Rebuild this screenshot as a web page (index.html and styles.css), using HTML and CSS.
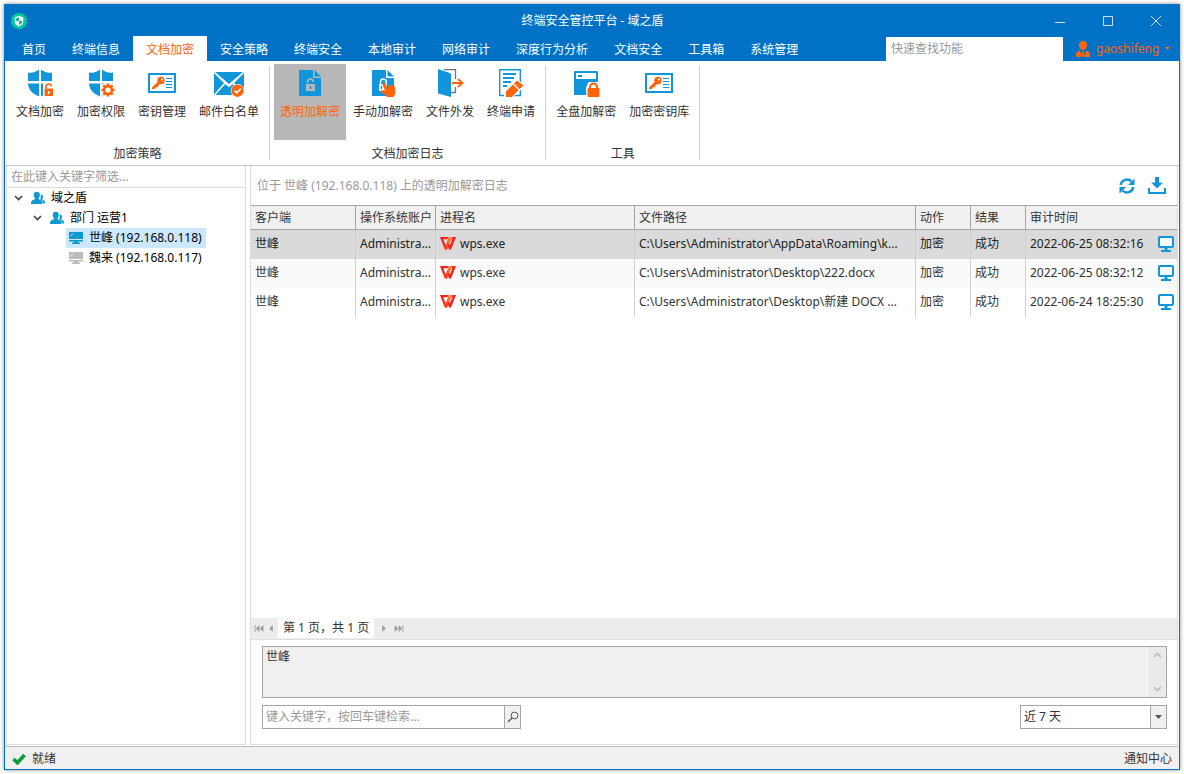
FILE: index.html
```html
<!DOCTYPE html>
<html lang="zh-CN">
<head>
<meta charset="utf-8">
<title>终端安全管控平台 - 域之盾</title>
<link rel="stylesheet" href="styles.css">
</head>
<body>
<svg class="defs" aria-hidden="true">
  <defs>
    <linearGradient id="wps-red" x1="0" y1="0" x2="1" y2="1"><stop offset="0" stop-color="#f5151c"/><stop offset="1" stop-color="#ff4a1c"/></linearGradient>
    <linearGradient id="wps-orange" x1="0" y1="1" x2="0" y2="0"><stop offset="0" stop-color="#ff3a1c"/><stop offset="1" stop-color="#ff9a3c"/></linearGradient>
  </defs>
  <symbol id="shield" viewBox="-1 0 30 30">
    <path fill="#1296db" d="M2 3.500C6 4.500 10 3.200 13 .6V12H2zM15 .6C18 3.200 22 4.500 26 3.500V12H15zM2 14.500H13V27.500C6 24.500 2.500 20.500 2 14.500zM15 14.500H26C25.500 20.500 22 24.500 15 27.500z"/>
  </symbol>
  <symbol id="keycard" viewBox="-1 0 30 30">
    <rect x="1" y="5" width="26" height="18" fill="#fff" stroke="#1296db" stroke-width="2"/>
    <path d="M4 18.500L10 12.500L12.500 15L10.500 16.200L10 18L8 18.200L6.500 20H4z" fill="#fd640c"/>
    <circle cx="13" cy="11.500" r="3.700" fill="#fd640c"/><circle cx="14" cy="10.500" r="1.100" fill="#fff"/>
    <path d="M18 9.500h6M18 12.500h6M18 15.500h6M18 18.500h6" stroke="#1296db" stroke-width="1.200"/>
  </symbol>
  <symbol id="people" viewBox="0 0 14 14">
    <path fill="#0e9ad0" d="M9.500 3.500c1.800-.3 2.700.9 2.500 2.500-.1 1-.4 1.500-.8 2 0 .6.300.8 1 1 1.300.5 1.800 1.200 1.800 3.500h-1.800C12 10.500 11 9.300 9 8.300 9.900 7 10.200 5 9.500 3.500z"/>
    <path fill="#0e9ad0" d="M5.800.7c2.200 0 3.200 1.400 3.100 3.300C8.800 5.500 8.300 6.500 7.700 7.200c-.3.800.2 1.100 1.200 1.500 2 .7 2.700 1.500 2.700 4.300H0c0-2.800.8-3.600 2.700-4.300 1-.4 1.500-.7 1.200-1.500C3.300 6.500 2.800 5.500 2.700 4 2.600 2.100 3.600.7 5.800.7z"/>
  </symbol>
  <symbol id="pc" viewBox="0 0 14 12">
    <path d="M0 0h14v7H0zM0 8h14v1.500H9v1H11V12H3v-1.500h2v-1H0z" fill="currentColor"/>
    <path d="M1.500 4.200L4 1.700" stroke="#fff" stroke-width=".8"/>
  </symbol>
  <symbol id="screen" viewBox="0 0 16 16">
    <rect x="1" y="1" width="14" height="10" rx="1" fill="#fff" stroke="#1296db" stroke-width="2"/>
    <path fill="#1296db" d="M6.500 12h3v2H13v2H3v-2h3.500z"/>
  </symbol>
  <symbol id="wps" viewBox="0 0 16 13">
    <path fill="url(#wps-red)" d="M0 0H8.500L7.500 2.300H3.300L5.700 8.500 9 0H11.500L7 12.500H4.700z"/>
    <path fill="url(#wps-orange)" d="M9.300 0H12.500L7 12.500H5.500z"/>
    <path fill="#f8201c" d="M12.300 0H16L11 12.500H9L7.800 9.300 8.900 6.500 9.900 8.500 12.500 2.300H11.500z"/>
  </symbol>
  <symbol id="chevron" viewBox="0 0 9 6"><path d="M1 1L4.500 4.500L8 1" fill="none" stroke="currentColor" stroke-width="1.600"/></symbol>
</svg>

<div class="window">
  <header class="titlebar">
    <svg class="logo" viewBox="0 0 16 16"><circle cx="8" cy="8" r="8" fill="#05c89a"/><path fill="#fff" d="M8 2.800L12.300 4.400V8.500C12.300 11 10 12.700 8 13.500 6 12.700 3.700 11 3.700 8.500V4.400z"/><path fill="#05b894" d="M8 4.200V8H4.800V5.400zM8 8h3.200c0 2-1.500 3.200-3.200 4z"/></svg>
    <h1 class="title">终端安全管控平台 - 域之盾</h1>
    <div class="controls">
      <button aria-label="最小化"><svg viewBox="0 0 10 10"><path d="M0 6.500H10"/></svg></button>
      <button aria-label="最大化"><svg viewBox="0 0 10 10"><path d="M.5.5h9v9h-9z"/></svg></button>
      <button aria-label="关闭"><svg viewBox="0 0 10 10"><path d="M0 0L10 10M10 0L0 10"/></svg></button>
    </div>
  </header>

  <div class="tabbar">
    <nav class="tabs">
      <button>首页</button><button>终端信息</button><button class="active">文档加密</button><button>安全策略</button><button>终端安全</button><button>本地审计</button><button>网络审计</button><button>深度行为分析</button><button>文档安全</button><button>工具箱</button><button>系统管理</button>
    </nav>
    <input class="quick" type="text" placeholder="快速查找功能" aria-label="快速查找功能">
    <button class="user">
      <svg class="user-icon" viewBox="0 0 14 16"><path fill="#fd640c" d="M7 0c2.500 0 4 1.600 4 4S9.300 9 7 9 3 6.400 3 4 4.500 0 7 0zM4 9.500l2 6.500H1.500C.5 16 0 15.500 0 14.500 0 11 1.500 10 4 9.500zM10 9.500c2.500.5 4 1.500 4 5 0 1-.5 1.500-1.500 1.500H8zM6.200 10.200h1.600l.5 3.800L7 16l-1.300-2z"/></svg>
      <span>gaoshifeng</span>
      <svg class="user-caret" viewBox="0 0 5 3"><path d="M0 0h5L2.500 3z" fill="#fd640c"/></svg>
    </button>
  </div>

  <div class="ribbon">
    <section class="group">
      <div class="tools">
        <button class="tool"><svg viewBox="-1 0 30 30"><use href="#shield" x="-1" width="30" height="30"/><path fill="#fff" d="M17 14h12v15H17z"/><path d="M20 19.500V18a2.700 2.700 0 0 1 5.400-.6" fill="none" stroke="#fd640c" stroke-width="1.600"/><path fill="#fd640c" d="M18.500 19.500H27V27H18.500z"/><path d="M22.700 22v3" stroke="#fff" stroke-width="1.500"/></svg>文档加密</button>
        <button class="tool"><svg viewBox="-1 0 30 30"><use href="#shield" x="-1" width="30" height="30"/><circle cx="21" cy="21" r="7.800" fill="#fff"/><circle cx="21" cy="21" r="3.900" fill="none" stroke="#fd640c" stroke-width="2.600"/><path stroke="#fd640c" stroke-width="2.600" d="M21 14.500v3M21 24.500v3M14.500 21h3M24.500 21h3M16.400 16.400l2 2M23.600 23.600l2 2M25.600 16.400l-2 2M18.400 23.600l-2 2"/></svg>加密权限</button>
        <button class="tool"><svg viewBox="-1 0 30 30"><use href="#keycard" x="-1" width="30" height="30"/></svg>密钥管理</button>
        <button class="tool"><svg viewBox="-1 0 30 30"><path fill="#1296db" d="M0 3H28L14 15zM-1 4L9 14-1 25.500zM29 4V25L19 14zM10.300 15L14 18.200 17.700 15 27.500 26H.5z"/><circle cx="22.500" cy="21.700" r="6.800" fill="#fff"/><circle cx="22.500" cy="21.700" r="6.200" fill="#fd640c"/><path d="M19.500 21.700l2.300 2.200 4-4.200" fill="none" stroke="#fff" stroke-width="1.700"/></svg>邮件白名单</button>
      </div>
      <h2>加密策略</h2>
    </section>
    <section class="group">
      <div class="tools">
        <button class="tool selected"><svg viewBox="-1 0 30 30"><path fill="#1296db" d="M3 1H17V9H25V27H3zM18.500 1L25 7.500H18.500z"/><path d="M11.500 14V13a2.900 2.900 0 0 1 5.800 0" fill="none" stroke="#b8b8b8" stroke-width="1.500"/><path fill="#b8b8b8" d="M10 15h9v7h-9z"/><path d="M14.500 17v3" stroke="#1296db" stroke-width="1.500"/></svg>透明加解密</button>
        <button class="tool"><svg viewBox="-1 0 30 30"><path fill="#1296db" d="M3 1H17V9H25V27H3zM18.500 1L25 7.500H18.500z"/><path d="M11.500 15V13a2.900 2.900 0 0 1 5.800 0v2" fill="none" stroke="#fff" stroke-width="1.500"/><path fill="#fff" d="M10 15h8v7h-8z"/><path d="M12.500 17v3" stroke="#1296db" stroke-width="1.500"/><path fill="#fd640c" d="M14 14.500c1-1 2.300-.5 2.800.7l1.400 3 3.800-2.200c1-.5 1.500.2 1.800.8 1-.4 1.700.2 2 1.200.5 2 .7 4.500.2 7.500L24.500 28H18c-1-2-3-3.500-5.500-4.300-1.500-.7-1-2.400.4-2.500l3.100.3-2.300-5.300c-.2-.6-.1-1.200.3-1.700z"/></svg>手动加解密</button>
        <button class="tool"><svg viewBox="-1 0 30 30"><path d="M8 .7H19.500V10M19.500 18V23.500H14" fill="none" stroke="#5f7890" stroke-width="1.300"/><path fill="#1296db" d="M2 0L15 4.500V28L2 24.500z"/><path d="M16 14h9M22 10l4.500 4-4.500 4" fill="none" stroke="#fd640c" stroke-width="1.800"/></svg>文件外发</button>
        <button class="tool"><svg viewBox="-1 0 30 30"><path d="M2.700.7H23.300V26.500H2.700z" fill="#fff" stroke="#1296db" stroke-width="1.400"/><path d="M6 5h13M6 9h11M6 13h8M6 17h4" stroke="#1296db" stroke-width="2"/><path fill="#fff" d="M7 29V22L20 10l8 7-13 12z"/><path fill="#fd640c" d="M9 28v-5.500l7-7 5.500 5.500L15 28zM17 14.500l3-3 6.500 5-4 3.600z"/></svg>终端申请</button>
      </div>
      <h2>文档加密日志</h2>
    </section>
    <section class="group">
      <div class="tools">
        <button class="tool"><svg viewBox="-1 0 30 30"><rect x="2" y="2" width="24" height="24" rx="1" fill="#1296db"/><path fill="#fff" d="M4 4h20v6H4z"/><path fill="#1296db" d="M6 6h4v2H6z"/><path fill="#fff" d="M14 19l2.500-6h10L28 19v10H14.500z"/><path d="M18 19.500V18a3.500 3.500 0 0 1 7 0v1.500" fill="none" stroke="#fd640c" stroke-width="2"/><rect x="15.500" y="19" width="12" height="9" rx="1" fill="#fd640c"/></svg>全盘加解密</button>
        <button class="tool"><svg viewBox="-1 0 30 30"><use href="#keycard" x="-1" width="30" height="30"/></svg>加密密钥库</button>
      </div>
      <h2>工具</h2>
    </section>
  </div>

  <div class="body">
    <aside class="side">
      <input class="filter" type="text" placeholder="在此键入关键字筛选..." aria-label="在此键入关键字筛选">
      <ul class="tree">
        <li><div class="node"><svg class="chev"><use href="#chevron"/></svg><svg class="people"><use href="#people"/></svg>域之盾</div>
          <ul>
            <li><div class="node"><svg class="chev"><use href="#chevron"/></svg><svg class="people"><use href="#people"/></svg>部门 运营1</div>
              <ul class="leaves">
                <li><div class="node leaf current"><svg class="pc"><use href="#pc"/></svg>世峰 (192.168.0.118)</div></li>
                <li><div class="node leaf offline"><svg class="pc"><use href="#pc"/></svg>魏来 (192.168.0.117)</div></li>
              </ul>
            </li>
          </ul>
        </li>
      </ul>
    </aside>

    <main class="main">
      <div class="toolbar">
        <p>位于 世峰 (192.168.0.118) 上的透明加解密日志</p>
        <button aria-label="刷新"><svg class="refresh" viewBox="0 0 16 16"><g fill="none" stroke="#1296db" stroke-width="2.400"><path d="M1.700 7A6.300 6.300 0 0 1 12.500 3.500"/><path d="M14.300 9A6.300 6.300 0 0 1 3.500 12.500"/></g><path fill="#1296db" d="M15.500.5V7H9zM.5 15.500V9H7z"/></svg></button>
        <button aria-label="下载"><svg class="download" viewBox="0 0 18 17"><path fill="#1296db" d="M7 0h4v5.500h4L9 11.500 3 5.500h4zM0 11h2v4h14v-4h2v6H0z"/></svg></button>
      </div>
      <table class="log">
        <colgroup><col class="c-client"><col class="c-account"><col class="c-process"><col><col class="c-short"><col class="c-short"><col class="c-time"></colgroup>
        <thead><tr><th>客户端</th><th>操作系统账户</th><th>进程名</th><th>文件路径</th><th>动作</th><th>结果</th><th>审计时间</th></tr></thead>
        <tbody>
          <tr class="picked"><td>世峰</td><td>Administra...</td><td><span class="cell"><svg class="wps"><use href="#wps"/></svg>wps.exe</span></td><td>C:\Users\Administrator\AppData\Roaming\k...</td><td>加密</td><td>成功</td><td><span class="cell time">2022-06-25 08:32:16<svg class="screen"><use href="#screen"/></svg></span></td></tr>
          <tr class="alt"><td>世峰</td><td>Administra...</td><td><span class="cell"><svg class="wps"><use href="#wps"/></svg>wps.exe</span></td><td>C:\Users\Administrator\Desktop\222.docx</td><td>加密</td><td>成功</td><td><span class="cell time">2022-06-25 08:32:12<svg class="screen"><use href="#screen"/></svg></span></td></tr>
          <tr><td>世峰</td><td>Administra...</td><td><span class="cell"><svg class="wps"><use href="#wps"/></svg>wps.exe</span></td><td>C:\Users\Administrator\Desktop\新建 DOCX ...</td><td>加密</td><td>成功</td><td><span class="cell time">2022-06-24 18:25:30<svg class="screen"><use href="#screen"/></svg></span></td></tr>
        </tbody>
      </table>
      <div class="pager">
        <button aria-label="第一页"><svg class="p-end" viewBox="0 0 10 8"><path d="M0 0h1v8H0zM5.500 0v8L1.500 4zM10 0v8L6 4z"/></svg></button>
        <button aria-label="上一页"><svg class="p-one" viewBox="0 0 4 8"><path d="M4 0v8L0 4z"/></svg></button>
        <span>第 1 页，共 1 页</span>
        <button aria-label="下一页"><svg class="p-one" viewBox="0 0 4 8"><path d="M0 0v8L4 4z"/></svg></button>
        <button aria-label="最后一页"><svg class="p-end" viewBox="0 0 10 8"><path d="M9 0h1v8H9zM4.500 0v8L8.500 4zM0 0v8L4 4z"/></svg></button>
      </div>
      <div class="detail">
        <div class="memo">
          <textarea readonly aria-label="详细内容">世峰</textarea>
          <div class="scroll">
            <button aria-label="向上滚动"><svg class="chev up"><use href="#chevron"/></svg></button>
            <button aria-label="向下滚动"><svg class="chev"><use href="#chevron"/></svg></button>
          </div>
        </div>
        <div class="query">
          <div class="search">
            <input type="text" placeholder="键入关键字，按回车键检索..." aria-label="键入关键字检索">
            <button aria-label="检索"><svg viewBox="0 0 12 12"><circle cx="7.500" cy="4.500" r="3.400" fill="none" stroke="#555"/><path d="M5 7L1 11" stroke="#555" stroke-width="1.400"/></svg></button>
          </div>
          <div class="range">
            <select aria-label="时间范围"><option>近 7 天</option></select>
            <span class="drop"><svg viewBox="0 0 7 4"><path d="M0 0h7L3.500 4z" fill="#555"/></svg></span>
          </div>
        </div>
      </div>
    </main>
  </div>

  <footer class="status">
    <svg viewBox="0 0 14 12"><path d="M1.500 6L5.500 9.800L12.500 2" fill="none" stroke="#0f9d3a" stroke-width="3.600"/></svg>
    <span>就绪</span>
    <button>通知中心</button>
  </footer>
</div>
</body>
</html>
```

FILE: styles.css
```css
* { box-sizing: border-box; }
body {
  margin: 0;
  padding: 4px;
  height: 100vh;
  background: #fff;
  color: #333;
  font: 12px/20px "Noto Sans", "Noto Sans CJK SC", sans-serif;
}
button, input, select, textarea {
  margin: 0;
  padding: 0;
  border: 0;
  border-radius: 0;
  background: none;
  color: inherit;
  font: inherit;
  outline: none;
}
input::placeholder { color: #999; opacity: 1; }
svg { display: block; flex: none; }
h1, h2, p, ul { margin: 0; padding: 0; font-size: 12px; font-weight: 400; }
ul { list-style: none; }
.defs { position: absolute; width: 0; height: 0; }

.window {
  display: flex;
  flex-direction: column;
  height: 100%;
  border: 1px solid #0072c6;
  box-shadow: 0 0 4px rgba(0, 0, 0, .45);
}

/* title bar and tabs */
.titlebar {
  display: grid;
  grid-template-columns: 1fr auto 1fr;
  align-items: center;
  height: 31px;
  padding-left: 6px;
  background: #0072c6;
  color: #fff;
}
.logo { width: 16px; height: 16px; }
.title { padding-right: 5px; }
.controls { display: flex; justify-content: flex-end; margin-right: -1px; }
.controls button { display: grid; place-items: center; width: 48px; height: 30px; }
.controls svg { width: 10px; height: 10px; fill: none; stroke: #d0e0ee; }
.tabbar { display: flex; height: 25px; background: #0072c6; color: #fff; }
.tabs { display: flex; flex: 1; padding-left: 4px; }
.tabs button { padding: 2px 13px 0; white-space: nowrap; }
.tabs .active { background: #fff; color: #fd640c; }
.quick { width: 177px; margin-top: 1px; padding: 0 5px; background: #fff; color: #333; }
.user { display: flex; align-items: center; gap: 6px; width: 116px; padding-left: 13px; color: #fd640c; }
.user-icon { width: 14px; height: 16px; }
.user-caret { width: 5px; height: 3px; }

/* ribbon */
.ribbon { display: flex; height: 105px; padding: 3px 1px 5px; border-bottom: 1px solid #c6c6c6; background: #fff; }
.group {
  display: flex;
  flex-direction: column;
  justify-content: space-between;
  padding: 0 4px;
  border-right: 1px solid;
  border-image: linear-gradient(transparent 3px, #d0d0d0 3px) 1;
}
.group h2 { line-height: 12px; text-align: center; }
.tools { display: flex; gap: 1px; }
.tool { display: flex; flex-direction: column; align-items: center; gap: 3px; height: 76px; padding: 5px 6px 0; line-height: 20px; white-space: nowrap; }
.tool svg { width: 30px; height: 30px; }
.selected { background: #b8b8b8; color: #fd640c; }

/* work area */
.body { display: flex; flex: 1; min-height: 0; gap: 4px; padding: 0 1px 1px; background: #fff; }
.side { width: 240px; border: 1px solid #dcdcdc; border-top: 0; }
.filter { display: block; width: 100%; height: 22px; padding: 0 4px; border-bottom: 1px solid #dcdcdc; }
.tree { color: #000; }
.node { display: flex; align-items: center; height: 20px; padding-left: 7px; white-space: nowrap; }
.tree ul .node { padding-left: 26px; }
.tree .leaves { display: flex; flex-direction: column; align-items: flex-start; padding-left: 59px; }
.tree .leaves .leaf { gap: 6px; padding: 0 4px 0 3px; }
.current { background: #cce8ff; }
.chev { width: 9px; height: 6px; color: #444; }
.people { width: 14px; height: 14px; margin: 0 6px 0 8px; }
.pc { width: 14px; height: 12px; color: #0e9ad0; }
.offline .pc { color: #bcbcbc; }

.main { display: flex; flex: 1; flex-direction: column; min-width: 0; border: 1px solid #dcdcdc; border-top: 0; }
.toolbar { display: flex; align-items: center; gap: 13px; height: 39px; padding: 0 11px 0 6px; }
.toolbar p { flex: 1; color: #999; }
.refresh { width: 16px; height: 16px; }
.download { width: 18px; height: 17px; }

.log { width: 100%; border-collapse: separate; border-spacing: 0; table-layout: fixed; }
.log th, .log td { overflow: hidden; padding: 0 0 0 4px; border-right: 1px solid #d0d0d0; text-align: left; white-space: nowrap; }
.log th { height: 25px; border-top: 1px solid #a5a5a5; border-bottom: 1px solid #a5a5a5; border-right-color: #a5a5a5; background: #f0f0f0; font-weight: 400; }
.log td { height: 29px; padding-bottom: 2px; }
.log th:last-child, .log td:last-child { border-right: 0; }
.c-client { width: 105px; }
.c-account { width: 80px; }
.c-process { width: 199px; }
.c-short { width: 55px; }
.c-time { width: 151px; }
.picked { background: #dadada; color: #222; }
.alt { background: #fafafa; }
.cell { display: flex; align-items: center; gap: 4px; }
.time { justify-content: space-between; padding-right: 3px; }
.wps { width: 16px; height: 13px; }
.screen { width: 16px; height: 16px; }

.pager { display: flex; align-items: center; height: 22px; margin-top: auto; padding: 0 3px 1px; border-bottom: 1px solid #dedede; background: #ededed; }
.pager svg { height: 7px; fill: #999; }
.p-end { width: 10px; }
.p-one { width: 4px; }
.pager span { padding: 0 5px; background: #fff; }
.pager button { padding: 0 5px 0 0; }
.pager span ~ button { padding: 0 0 0 8px; }

.detail { padding: 6px 10px 15px 11px; }
.memo { display: flex; height: 52px; border: 1px solid #a5a5a5; background: #f0f0f0; }
.memo textarea { flex: 1; overflow: hidden; padding: 0 3px; resize: none; }
.scroll { display: flex; flex-direction: column; justify-content: space-between; width: 17px; padding: 5px 4px; background: #eaeaea; }
.scroll .chev { color: #bbb; }
.up { transform: rotate(180deg); }
.query { display: flex; justify-content: space-between; margin-top: 7px; }
.search { display: flex; width: 259px; height: 24px; border: 1px solid #a5a5a5; }
.search input { flex: 1; min-width: 0; padding: 0 3px; }
.search button { display: grid; place-items: center; width: 16px; border-left: 1px solid #a5a5a5; background: #f0f0f0; }
.search svg { width: 12px; height: 12px; }
.range { position: relative; width: 147px; height: 24px; border: 1px solid #a5a5a5; }
.range select { width: 100%; height: 100%; padding: 0 20px 0 3px; appearance: none; }
.drop { position: absolute; inset: 0 0 0 auto; display: grid; place-items: center; width: 16px; border-left: 1px solid #a5a5a5; background: #f0f0f0; pointer-events: none; }
.drop svg { width: 7px; height: 4px; }

.status { display: flex; align-items: center; gap: 6px; height: 23px; padding: 1px 7px 0; border-top: 1px solid #bcbcbc; background: #f0f0f0; }
.status svg { width: 14px; height: 12px; }
.status button { margin-left: auto; }
```
